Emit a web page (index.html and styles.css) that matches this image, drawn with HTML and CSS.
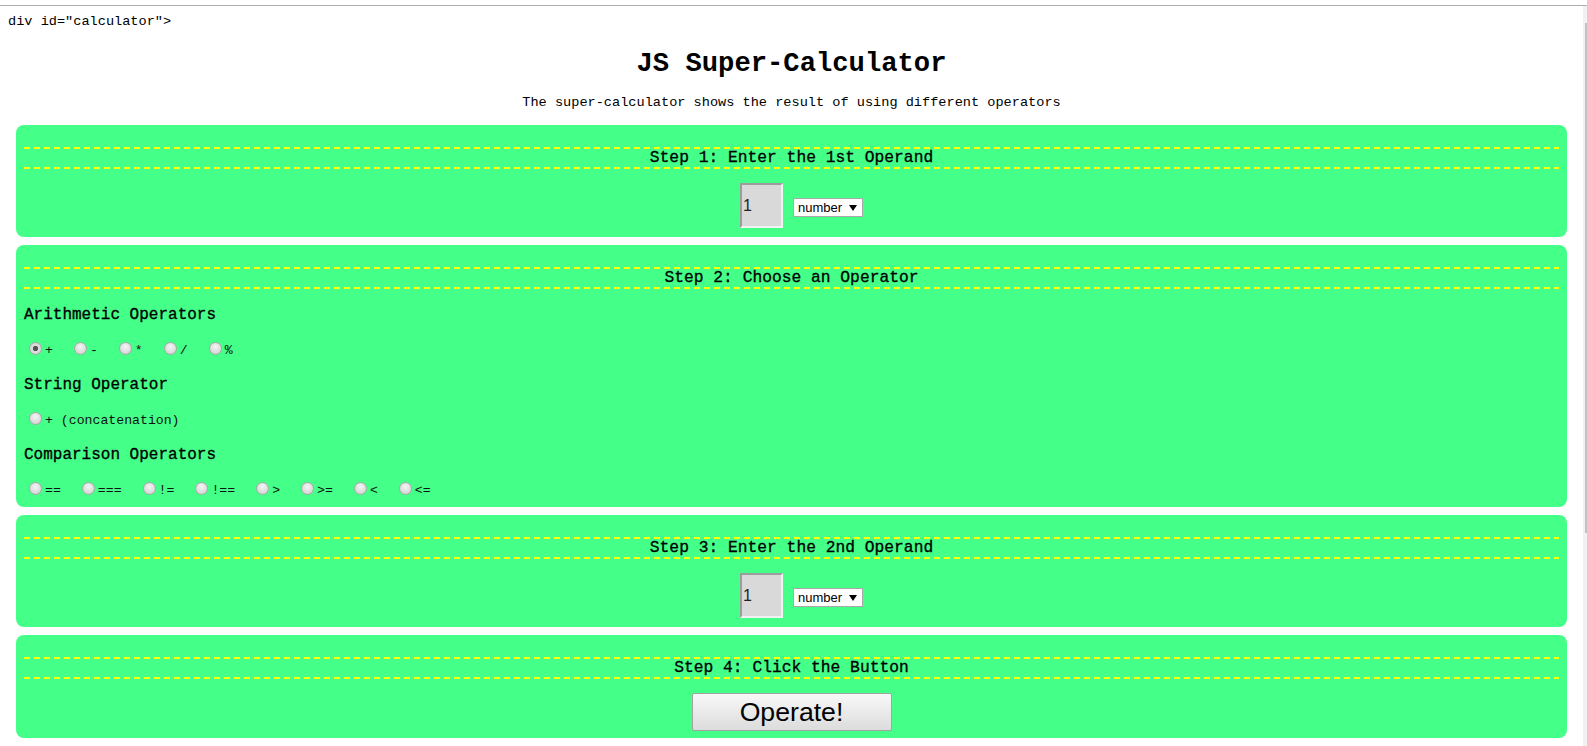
FILE: index.html
```html
<!DOCTYPE html>
<html lang="en">
<head>
<meta charset="utf-8">
<title>JS Super-Calculator</title>
<link rel="stylesheet" href="styles.css">
</head>
<body>
<div class="chrome"></div>
<div class="viewport">
  <main class="page">
    <p class="src">div id="calculator"&gt;</p>
    <h1 class="title">JS Super-Calculator</h1>
    <p class="sub">The super-calculator shows the result of using different operators</p>

    <section class="panel">
      <h3 class="step">Step 1: Enter the 1st Operand</h3>
      <div class="operand">
        <input class="num" type="text" value="1">
        <div class="select"><span>number</span><span class="caret"></span></div>
      </div>
    </section>

    <section class="panel ops">
      <h3 class="step">Step 2: Choose an Operator</h3>
      <h4 class="ophead">Arithmetic Operators</h4>
      <div class="radios">
        <label class="opt"><input type="radio" name="op" checked>+</label>
        <label class="opt"><input type="radio" name="op">-</label>
        <label class="opt"><input type="radio" name="op">*</label>
        <label class="opt"><input type="radio" name="op">/</label>
        <label class="opt"><input type="radio" name="op">%</label>
      </div>
      <h4 class="ophead">String Operator</h4>
      <div class="radios">
        <label class="opt"><input type="radio" name="op">+ (concatenation)</label>
      </div>
      <h4 class="ophead">Comparison Operators</h4>
      <div class="radios">
        <label class="opt"><input type="radio" name="op">==</label>
        <label class="opt"><input type="radio" name="op">===</label>
        <label class="opt"><input type="radio" name="op">!=</label>
        <label class="opt"><input type="radio" name="op">!==</label>
        <label class="opt"><input type="radio" name="op">&gt;</label>
        <label class="opt"><input type="radio" name="op">&gt;=</label>
        <label class="opt"><input type="radio" name="op">&lt;</label>
        <label class="opt"><input type="radio" name="op">&lt;=</label>
      </div>
    </section>

    <section class="panel">
      <h3 class="step">Step 3: Enter the 2nd Operand</h3>
      <div class="operand">
        <input class="num" type="text" value="1">
        <div class="select"><span>number</span><span class="caret"></span></div>
      </div>
    </section>

    <section class="panel">
      <h3 class="step">Step 4: Click the Button</h3>
      <div class="action">
        <button class="btn" type="button">Operate!</button>
      </div>
    </section>
  </main>
  <div class="scrollbar"><div class="thumb"></div></div>
</div>
</body>
</html>
```
FILE: styles.css
```css
html, body {
  margin: 0;
  padding: 0;
  overflow: hidden;
  background: #ffffff;
}

body {
  font-family: "Liberation Mono", "Courier New", monospace;
  color: #000;
}

.chrome {
  height: 5px;
  border-bottom: 1px solid #adadad;
}

.viewport {
  display: flex;
  height: 740px;
}

.page {
  width: 1583px;
  flex: none;
  padding-top: 8px;
  box-sizing: border-box;
}

.src {
  margin: 0 0 0 8px;
  font-size: 13.6px;
  line-height: 15px;
}

.title {
  margin: 21px 0 0;
  text-align: center;
  font-size: 27.2px;
  line-height: 28px;
  font-weight: bold;
}

.sub {
  margin: 17px 0 15px;
  text-align: center;
  font-size: 13.6px;
  line-height: 15px;
}

.panel {
  background: #44ff88;
  border-radius: 8px;
  margin: 0 16px 8px 16px;
  padding: 0 8px;
  overflow: hidden;
}

.step {
  margin: 22px 0 0;
  padding: 2px 0;
  background:
    linear-gradient(to right, #ffff00 6px, transparent 6px) left top / 10px 2px repeat-x,
    linear-gradient(to right, #ffff00 6px, transparent 6px) left bottom / 10px 2px repeat-x;
  font-size: 16.3px;
  line-height: 18px;
  font-weight: normal;
  -webkit-text-stroke: 0.3px #000;
  text-align: center;
}

.operand {
  display: flex;
  justify-content: center;
  align-items: flex-end;
  gap: 10px;
  margin-top: 14px;
  padding-left: 20px;
  padding-bottom: 9px;
}

.num {
  width: 43px;
  height: 45px;
  box-sizing: border-box;
  margin: 0;
  padding: 0 0 0 1px;
  border: 2px solid;
  border-color: #9c9c9c #f2f2f2 #f2f2f2 #9c9c9c;
  background: #d9d9d9;
  font: 16px "Liberation Sans", Arial, sans-serif;
  color: #222;
  outline: none;
}

.select {
  width: 70px;
  height: 19px;
  box-sizing: border-box;
  margin-bottom: 11px;
  border: 1px solid #a9a9a9;
  background: #fff;
  display: flex;
  align-items: center;
  justify-content: space-between;
  padding: 0 5px 0 4px;
  font: 13px "Liberation Sans", Arial, sans-serif;
  color: #000;
}

.caret {
  width: 0;
  height: 0;
  border-left: 4px solid transparent;
  border-right: 4px solid transparent;
  border-top: 6px solid #000;
}

.ops {
  padding-bottom: 8px;
}

.ophead {
  margin: 17px 0 0;
  font-size: 16px;
  line-height: 18px;
  font-weight: normal;
  -webkit-text-stroke: 0.3px #000;
}

.radios {
  display: flex;
  align-items: center;
  height: 17px;
  margin-top: 18px;
}

.opt {
  display: flex;
  align-items: center;
  margin-right: 16px;
  font-size: 13.2px;
  line-height: 15px;
  color: #111;
}

.opt input {
  appearance: none;
  -webkit-appearance: none;
  width: 13px;
  height: 13px;
  box-sizing: border-box;
  margin: 0 3px 4px 5px;
  border: 1px solid #a8a8a8;
  border-radius: 50%;
  background: radial-gradient(circle at 50% 35%, #f5f5f5 0, #dcdcdc 60%, #cbcbcb 100%);
}

.opt input:checked {
  background: radial-gradient(circle at 50% 50%, #555 0, #555 2.3px, #dedede 3px, #cbcbcb 100%);
}

.action {
  display: flex;
  justify-content: center;
  margin-top: 14px;
  padding-bottom: 7px;
}

.btn {
  width: 200px;
  height: 38px;
  margin: 0;
  padding: 0;
  border: 1px solid #a3a3a3;
  border-radius: 2px;
  background: linear-gradient(#f8f8f8, #dcdcdc);
  font: 26.67px "Liberation Sans", Arial, sans-serif;
  color: #000;
}

.scrollbar {
  width: 4px;
  flex: none;
  background: #f1f1f1;
  display: flex;
  justify-content: flex-end;
}

.thumb {
  width: 2px;
  height: 510px;
  margin-top: 17px;
  background: #c1c1c1;
}
```
